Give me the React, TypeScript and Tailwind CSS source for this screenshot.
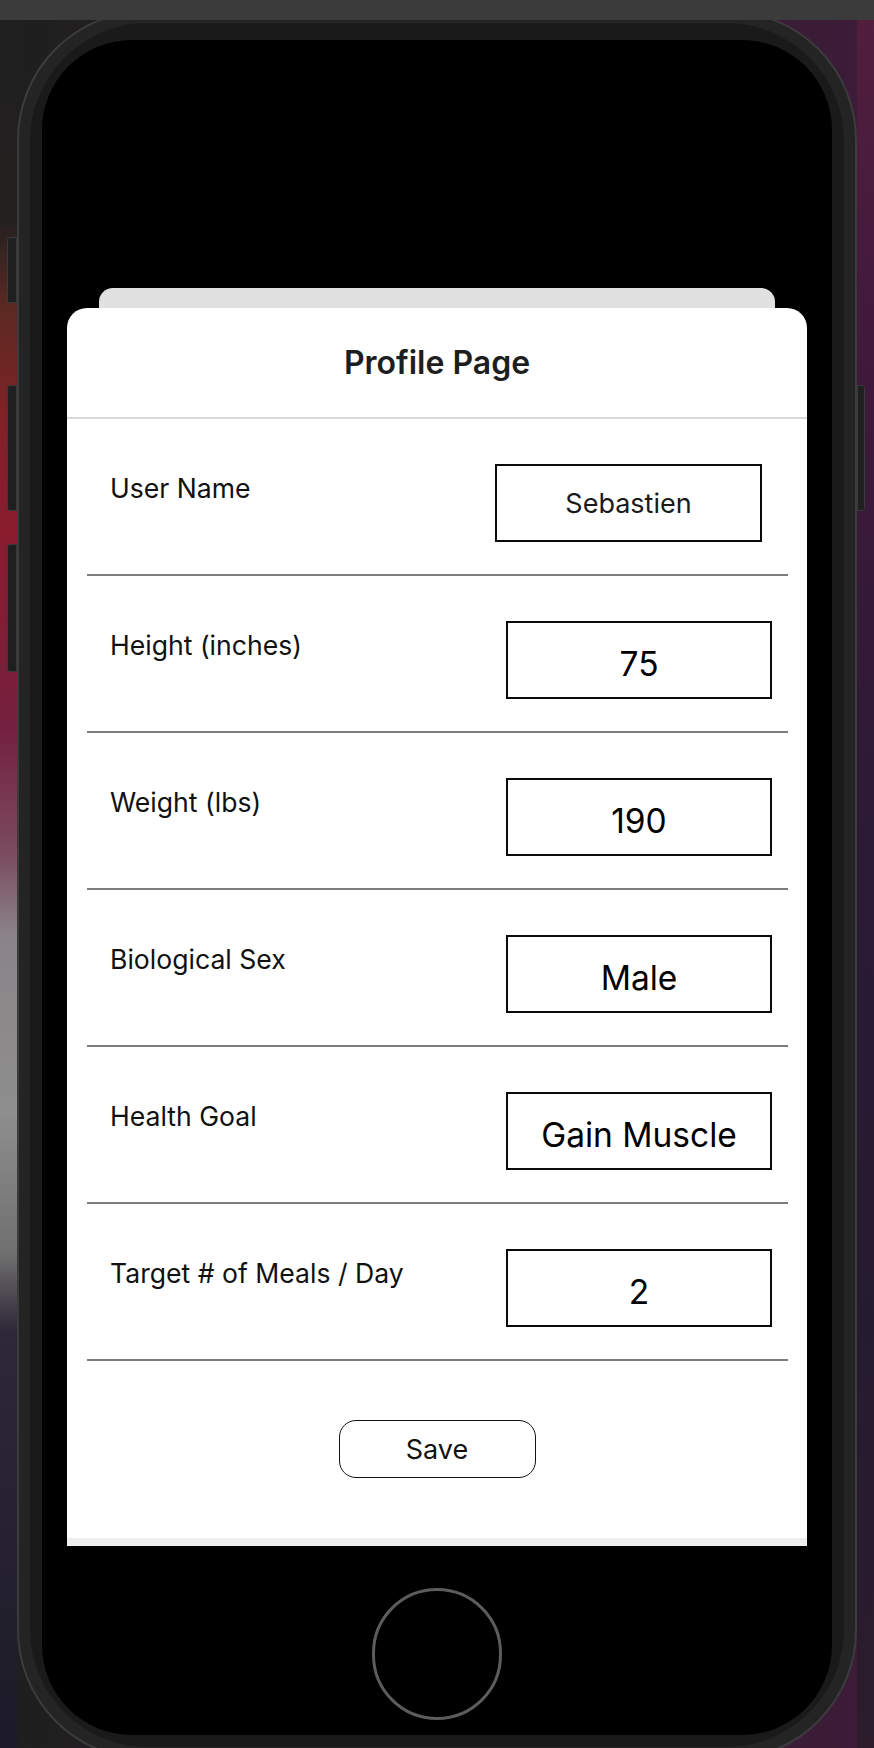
import React from "react";

const fields = [
  { label: "User Name", value: "Sebastien", small: true },
  { label: "Height (inches)", value: "75" },
  { label: "Weight (lbs)", value: "190" },
  { label: "Biological Sex", value: "Male" },
  { label: "Health Goal", value: "Gain Muscle" },
  { label: "Target # of Meals / Day", value: "2" },
];

function FieldRow({ label, value, small }: { label: string; value: string; small?: boolean }) {
  return (
    <div className="flex items-start justify-between pt-[45px] pb-[32px] border-b-2 border-[#7d7d7d]">
      <p className="mt-[8px] pl-[23px] text-[26.6px] leading-[32px] text-[#111]">{label}</p>
      {small ? (
        <div className="mr-[26px] w-[267px] h-[78px] border-2 border-[#0a0a0a] flex items-center justify-center">
          <span className="text-[27px] leading-[27px] text-[#1a1a1a]">{value}</span>
        </div>
      ) : (
        <div className="mr-[16px] w-[266px] h-[78px] border-2 border-[#0a0a0a] flex items-center justify-center pt-[8px]">
          <span className="text-[33.5px] leading-[33px] text-black">{value}</span>
        </div>
      )}
    </div>
  );
}

export default function App() {
  return (
    <div
      className="w-[874px] h-[1748px] overflow-hidden flex flex-col bg-[#1c1a28]"
      style={{ fontFamily: "Inter, 'Noto Sans', sans-serif" }}
    >
      <div className="relative z-10 h-[20px] shrink-0 bg-[#3b3b3b]" />

      <div className="-mt-[10px] flex">
        {/* left side of the wallpaper + side buttons */}
        <div className="w-[17px] shrink-0 flex flex-col bg-[linear-gradient(to_bottom,#1f1f1f_0%,#242020_12%,#5a2a22_17%,#7f2226_23%,#8a1c2e_30%,#74203f_41%,#7a4a5c_48%,#8a8488_53%,#8e8e8e_63%,#707070_71%,#2e2838_75.5%,#1c1a28_100%)]">
          <div className="mt-[227px] ml-[7px] w-[10px] h-[66px] rounded-l-[3px] bg-[#1f1f1f] border border-[#3a3a3a]" />
          <div className="mt-[82px] ml-[7px] w-[10px] h-[126px] rounded-l-[3px] bg-[#1f1f1f] border border-[#3a3a3a]" />
          <div className="mt-[33px] ml-[7px] w-[10px] h-[128px] rounded-l-[3px] bg-[#1f1f1f] border border-[#3a3a3a]" />
        </div>

        <div className="w-[840px] shrink-0 bg-[linear-gradient(to_right,#1f1f1f,#3c1c38)]">
          <div className="rounded-[130px] border-2 border-[#3c3c3c] bg-[#242424] p-[11px]">
            <div className="rounded-[118px] bg-[#1a1a1a] px-[12px] pt-[17px] pb-[12px]">
              <div className="rounded-[90px] bg-black overflow-hidden flex flex-col pt-[248px]">
                <div className="mx-[57px] h-[20px] rounded-t-[14px] bg-[#e1e1e1]" />

                <div className="mx-[25px] rounded-t-[20px] bg-white flex flex-col">
                  <div className="pt-[37px] pb-[36px] border-b-2 border-[#d9d9d9]">
                    <h1 className="text-center text-[32px] leading-[36px] font-semibold text-[#1e1e1e]">
                      Profile Page
                    </h1>
                  </div>

                  <div className="pl-[20px] pr-[19px] flex flex-col">
                    {fields.map((f) => (
                      <FieldRow key={f.label} label={f.label} value={f.value} small={f.small} />
                    ))}
                  </div>

                  <div className="flex justify-center mt-[59px] mb-[60px]">
                    <button className="w-[197px] h-[58px] rounded-[17px] border-[1.5px] border-[#111] bg-white flex items-center justify-center">
                      <span className="text-[27px] leading-[27px] text-[#111]">Save</span>
                    </button>
                  </div>

                  <div className="h-[8px] bg-[#efefef]" />
                </div>

                <div className="flex justify-center pt-[42px] pb-[15px]">
                  <div className="w-[130px] h-[132px] rounded-full border-[3px] border-[#5c5c5c]" />
                </div>
              </div>
            </div>
          </div>
        </div>

        {/* right side of the wallpaper + side button */}
        <div className="w-[17px] shrink-0 flex flex-col bg-[linear-gradient(to_bottom,#521e3e_0%,#40193c_20%,#2c1a36_45%,#251b30_75%,#2c1c2c_100%)]">
          <div className="mt-[375px] w-[8px] h-[126px] rounded-r-[3px] bg-[#1f1f1f] border border-[#3a3a3a]" />
        </div>
      </div>
    </div>
  );
}
